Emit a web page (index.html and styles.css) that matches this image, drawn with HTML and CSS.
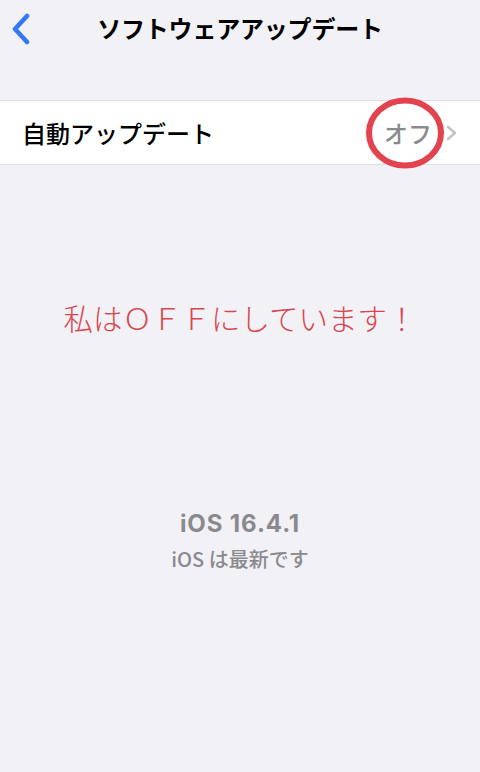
FILE: index.html
```html
<!DOCTYPE html>
<html lang="ja">
<head>
<meta charset="utf-8">
<link rel="stylesheet" href="styles.css">
</head>
<body>
<div class="screen">
  <header class="nav">
    <div class="nav-left">
      <svg class="back" width="20" height="32" viewBox="0 0 20 32"><path d="M16 3 L4 16 L16 29" fill="none" stroke="#3478f6" stroke-width="4.6" stroke-linecap="round" stroke-linejoin="round"/></svg>
    </div>
    <h1 class="title">ソフトウェアアップデート</h1>
    <div class="nav-right"></div>
  </header>

  <div class="group">
    <div class="row">
      <span class="label">自動アップデート</span>
      <span class="value-wrap">
        <span class="value">オフ</span>
        <svg class="circle" width="84" height="76" viewBox="0 0 84 76"><ellipse cx="42" cy="38" rx="36" ry="32.5" fill="none" stroke="#e2434e" stroke-width="6"/></svg>
      </span>
      <svg class="chev" width="12" height="16" viewBox="0 0 12 16"><path d="M2 2 L9 8 L2 14" fill="none" stroke="#c5c5c9" stroke-width="2.6" stroke-linecap="round" stroke-linejoin="round"/></svg>
    </div>
  </div>

  <p class="note">私はＯＦＦにしています！</p>

  <div class="version">
    <div class="ver-num">iOS 16.4.1</div>
    <div class="ver-sub">iOS は最新です</div>
  </div>
</div>
</body>
</html>
```

FILE: styles.css
```css
* { box-sizing: border-box; }
html, body {
  margin: 0;
  padding: 0;
  background: #f2f1f6;
}
body {
  width: 480px;
  height: 772px;
  overflow: hidden;
  font-family: "Noto Sans CJK JP", "Noto Sans", sans-serif;
  color: #000;
}
.screen {
  display: flex;
  flex-direction: column;
}
.nav {
  height: 56px;
  display: grid;
  grid-template-columns: 1fr auto 1fr;
  align-items: center;
}
.nav-left {
  display: flex;
  align-items: center;
  padding-left: 11px;
  padding-top: 1px;
}
.back { display: block; }
.title {
  margin: 0;
  font-size: 24px;
  font-weight: 700;
  letter-spacing: -0.2px;
  line-height: 1;
}
.group {
  margin-top: 44px;
  background: #fff;
  border-top: 1px solid #dedde2;
  border-bottom: 1px solid #dedde2;
}
.row {
  height: 63px;
  display: flex;
  align-items: center;
  padding-left: 22px;
  padding-right: 22px;
}
.label {
  flex: 1;
  font-size: 24px;
  font-weight: 500;
  line-height: 1;
}
.value-wrap {
  position: relative;
  display: inline-flex;
  align-items: center;
}
.value {
  font-size: 24px;
  color: #8a8a8e;
  font-weight: 500;
  line-height: 1;
}
.circle {
  position: absolute;
  left: -21px;
  top: 50%;
  margin-top: -38px;
}
.chev {
  margin-left: 14px;
  display: block;
}
.note {
  margin: 138px 0 0 0;
  text-align: center;
  color: #d94650;
  font-size: 29.5px;
  font-weight: 300;
  line-height: 1;
}
.version {
  margin-top: 179px;
  text-align: center;
  color: #8a8a8e;
}
.ver-num {
  font-family: Inter, "Noto Sans", sans-serif;
  font-size: 24px;
  font-weight: 700;
  letter-spacing: 0.9px;
  line-height: 1;
}
.ver-sub {
  margin-top: 13px;
  font-size: 20px;
  font-weight: 500;
  line-height: 1;
}
```
